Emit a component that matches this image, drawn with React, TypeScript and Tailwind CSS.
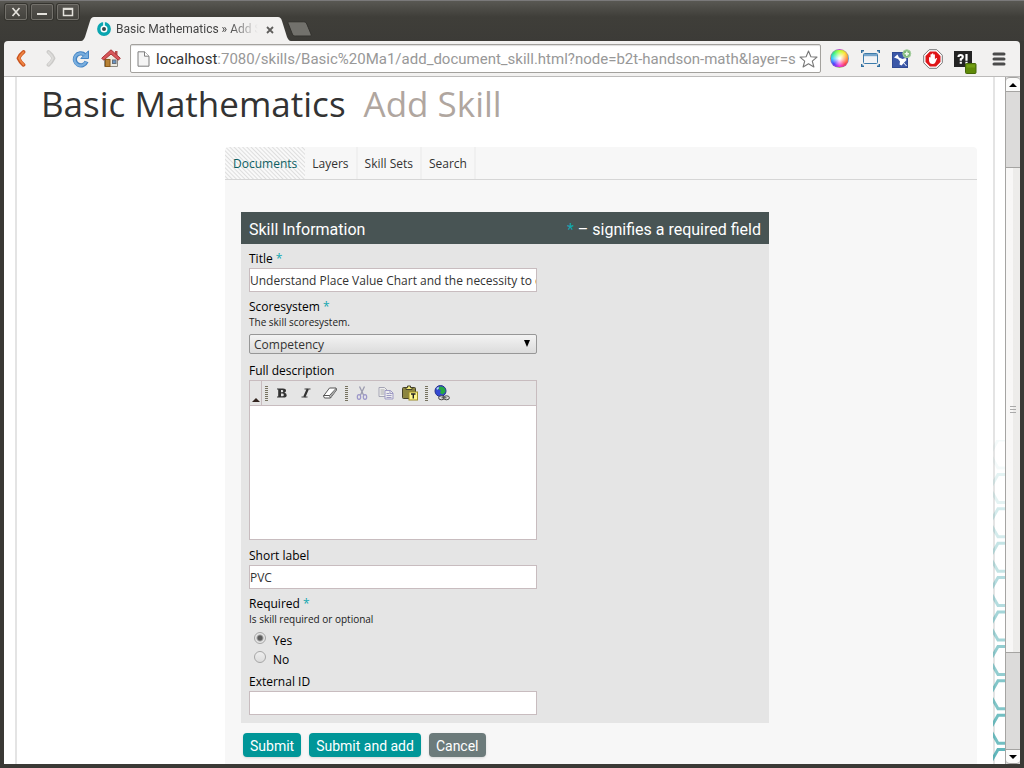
import React from "react";

const tabs = ["Documents", "Layers", "Skill Sets", "Search"];

function WindowButton({ label, children }: { label: string; children: React.ReactNode }) {
  return (
    <button
      aria-label={label}
      className="flex h-4 w-[22px] items-center justify-center rounded-xs border border-[#73716b] bg-linear-to-b from-[#55534e] to-[#44433e] shadow-[0_0_0_1px_#35342f]"
    >
      <svg width="12" height="10" viewBox="0 0 12 10" fill="none" stroke="#e4e2dc" strokeWidth="1.5">
        {children}
      </svg>
    </button>
  );
}

function TitleBar() {
  return (
    <header className="flex h-[41px] border-t border-[#7a797a] bg-linear-to-b from-[#595853] via-[#3f3e39] via-40% to-[#3c3b37] pl-[5px]">
      <div className="flex gap-1 pt-[3px]">
        <WindowButton label="Close">
          <path d="M2.5 1l7 8M9.5 1l-7 8" strokeWidth="1.7" />
        </WindowButton>
        <WindowButton label="Minimize">
          <path d="M1 7h10" strokeWidth="2" />
        </WindowButton>
        <WindowButton label="Maximize">
          <rect x="1.5" y="1.5" width="9" height="7" />
          <path d="M1.5 2.2h9" />
        </WindowButton>
      </div>
      <div className="ml-0.5 flex items-end">
        <svg width="13" height="24" viewBox="0 0 13 24" aria-hidden="true">
          <path d="M0 24C2 24 3 22 4 20L9 4C10 1 11 0 13 0V24Z" fill="#f2f1f0" />
        </svg>
        <div className="flex h-6 w-[184px] items-center bg-[#f2f1f0] pl-[3px]">
          <svg width="14" height="14" viewBox="0 0 14 14" aria-hidden="true">
            <circle cx="7" cy="7" r="5.2" fill="#fff" stroke="#0aa5b0" strokeWidth="3.4" />
            <circle cx="7" cy="7" r="2" fill="#37474b" />
            <path d="M7 0v4.5" stroke="#fff" strokeWidth="1.6" />
          </svg>
          <span className="ml-[5px] w-[142px] overflow-hidden mask-r-from-80% font-[Roboto,sans-serif] text-xs whitespace-nowrap text-[#444]">
            Basic Mathematics » Add Skill
          </span>
          <button aria-label="Close tab" className="ml-2 pt-0.5">
            <svg width="8" height="8" viewBox="0 0 8 8" stroke="#5f5e5c" strokeWidth="1.8">
              <path d="M1 1l6 6M7 1l-6 6" />
            </svg>
          </button>
        </div>
        <svg width="13" height="24" viewBox="0 0 13 24" aria-hidden="true">
          <path d="M13 24C11 24 10 22 9 20L4 4C3 1 2 0 0 0V24Z" fill="#f2f1f0" />
        </svg>
      </div>
      <button aria-label="New tab" className="-ml-1 mt-5 self-start">
        <svg width="26" height="16" viewBox="0 0 26 16">
          <path
            d="M2 .8H16.5C18 .8 19 1.5 19.8 3L24 13C24.5 14.5 24 15 23 15H8.5C7 15 6 14.5 5.3 13L1.2 2.5C.8 1.3 1 .8 2 .8Z"
            fill="#72716c"
            stroke="#33322e"
          />
        </svg>
      </button>
    </header>
  );
}

function NavButton({ label, children }: { label: string; children: React.ReactNode }) {
  return (
    <button aria-label={label} className="flex w-[30px] items-center justify-center">
      {children}
    </button>
  );
}

function ExtButton({ label, children }: { label: string; children: React.ReactNode }) {
  return (
    <button aria-label={label} className="flex w-[31px] items-center justify-center">
      {children}
    </button>
  );
}

function AddressBar() {
  return (
    <nav className="flex h-9 items-stretch rounded-t border-b border-[#bcbbba] bg-[#f2f1f0] pr-1 pl-0.5">
      <NavButton label="Back">
        <svg width="10" height="17" viewBox="0 0 10 17" fill="none" strokeLinecap="round" strokeLinejoin="round">
          <path d="M7.5 2C5.5 3.5 3.800 5.500 2.500 8.200C3.700 11 5.500 13 7.500 14.800" stroke="#c9531d" strokeWidth="3.8" />
          <path d="M7.500 2.200C5.700 4 4.200 5.800 3 8.200C4.100 10.800 5.700 12.700 7.500 14.500" stroke="#ef8544" strokeWidth="1.8" />
        </svg>
      </NavButton>
      <NavButton label="Forward">
        <svg width="10" height="17" viewBox="0 0 10 17" fill="none" strokeLinecap="round" strokeLinejoin="round">
          <path d="M2.500 2C4.500 3.500 6.200 5.500 7.500 8.200C6.300 11 4.500 13 2.500 14.800" stroke="#cbcac8" strokeWidth="3.8" />
          <path d="M2.500 2.200C4.300 4 5.800 5.800 7 8.200C5.900 10.800 4.300 12.700 2.500 14.500" stroke="#dddcda" strokeWidth="1.8" />
        </svg>
      </NavButton>
      <NavButton label="Reload">
        <svg width="18" height="18" viewBox="0 0 18 18" fill="none">
          <path d="M14.500 11.500A6 6 0 1 1 12.800 4.800" stroke="#4484c4" strokeWidth="4.200" />
          <path d="M16.500 .8V8.500H8.800Z" fill="#79aede" stroke="#4484c4" />
          <path d="M14 11.800A6 6 0 1 1 12.500 5" stroke="#79aede" strokeWidth="2.300" />
        </svg>
      </NavButton>
      <NavButton label="Home">
        <svg width="20" height="19" viewBox="0 0 20 19">
          <path d="M3.500 9L10 3.500L16.500 9V17.500H3.500Z" fill="#ece9df" stroke="#8d8a82" />
          <path d="M14 2h2.500v4H14Z" fill="#b54b48" />
          <path d="M10 .8L19.300 9.200L17.300 11.200L10 5L2.700 11.200L.7 9.200Z" fill="#d9575a" stroke="#a93437" />
          <rect x="4.500" y="10.500" width="4.500" height="7" fill="#b88235" stroke="#8a5b1c" />
          <rect x="11.500" y="11" width="3.500" height="3.500" fill="#6995c5" stroke="#68707a" />
        </svg>
      </NavButton>
      <div className="my-[3px] ml-1 flex min-w-0 flex-1 items-center rounded-xs border border-[#a3a19d] bg-white px-1.5 shadow-[inset_0_1px_1px_#ddd]">
        <svg width="13" height="16" viewBox="0 0 13 16" className="shrink-0" aria-hidden="true">
          <path d="M1 .8H7.500L12 5.200V15.200H1Z" fill="#f4f4f4" stroke="#7e7e7e" />
          <path d="M7.500 .8V5.200H12" fill="#fff" stroke="#7e7e7e" />
        </svg>
        <div className="ml-1.5 flex-1 overflow-hidden font-[Roboto,sans-serif] text-[15px] leading-5 whitespace-nowrap text-[#989898]">
          <span className="text-[#333]">localhost</span>
          :7080/skills/Basic%20Ma1/add_document_skill.html?node=b2t-handson-math&amp;layer=s
        </div>
        <button aria-label="Bookmark" className="-mr-1 shrink-0">
          <svg width="19" height="18" viewBox="0 0 19 18" fill="#fff" stroke="#777" strokeWidth="1.1">
            <path d="M9.500 1L11.900 6.700L18 7.100L13.300 11.100L14.900 17L9.500 13.800L4.100 17L5.700 11.100L1 7.100L7.100 6.700Z" strokeLinejoin="round" />
          </svg>
        </button>
      </div>
      <div className="ml-[3px] flex">
        <ExtButton label="Color picker">
          <span className="size-[19px] rounded-full border border-[#8b6fae]/50 bg-[radial-gradient(circle,white_5%,transparent_65%),conic-gradient(#b6ff30,#ffe12d,#ff8d35,#ff3b4e,#f02ee0,#4d3bff,#2cc8ff,#35f577,#b6ff30)]" />
        </ExtButton>
        <ExtButton label="Capture">
          <svg width="19" height="17" viewBox="0 0 19 17" fill="none">
            <path d="M.7 3V.7H3M16 .7h2.300V3M18.300 14v2.300H16M3 16.300H.7V14" stroke="#2f6e9f" strokeWidth="1.4" />
            <rect x="2.500" y="3.500" width="14" height="10" rx="1" fill="#f1f3f5" stroke="#3c7baa" />
            <path d="M3 4h13v2.200H3Z" fill="#76a5cb" />
          </svg>
        </ExtButton>
        <ExtButton label="Pin">
          <svg width="20" height="19" viewBox="0 0 20 19">
            <rect x=".5" y="3.500" width="15" height="15" fill="#3c58a8" stroke="#304a94" />
            <path d="M2 8.500L5.500 5.500L7 8.500L10.500 10L13.500 9L14.500 11L9.500 16.500L7.500 15.500L8 12.500L6 10Z" fill="#fff" />
            <path d="M11 13l3.500 4" stroke="#fff" />
            <circle cx="14.800" cy="4.700" r="4" fill="#7fba78" stroke="#a7cea0" />
            <path d="M14.800 2.500v4.400M12.600 4.700h4.400" stroke="#eef7ec" strokeWidth="1.5" />
          </svg>
        </ExtButton>
        <ExtButton label="Ad blocker">
          <svg width="20" height="20" viewBox="0 0 20 20">
            <path d="M6.200.7H13.800L19.300 6.200V13.800L13.800 19.300H6.200L.7 13.800V6.200Z" fill="#fff" stroke="#777" />
            <path d="M6.900 2.500H13.100L17.500 6.900V13.100L13.100 17.500H6.900L2.500 13.100V6.900Z" fill="#df1518" />
            <path d="M6 8.500q.8-.8 1.500 0V5.500q.8-.9 1.400 0V4.700q.8-.9 1.500 0v1q.8-.9 1.500 0v4.500l1.300-1.200q1-.3.8.7L12.300 13.500Q11.500 15 9.500 15Q6.500 15 6 11.500Z" fill="#fff" />
          </svg>
        </ExtButton>
      </div>
      <button aria-label="Notes" className="flex w-[34px] items-end justify-center pb-0.5">
        <svg width="23" height="23" viewBox="0 0 23 23">
          <rect width="18" height="16" fill="#232323" />
          <path d="M4.500 6Q4.500 4 6.500 4Q8.800 4 8.800 6Q8.800 7.300 6.800 8.300V9.700M12.500 3V9.700" fill="none" stroke="#fff" strokeWidth="2.2" />
          <path d="M5.700 10.800h2.200v2H5.700ZM11.400 10.800h2.200v2h-2.200Z" fill="#fff" />
          <rect x="11.500" y="12.500" width="10.500" height="10" rx="1" fill="#5f8a08" stroke="#47690a" />
          <path d="M12.500 13.500h8.500v3h-8.500Z" fill="#739e14" />
        </svg>
      </button>
      <button aria-label="Menu" className="flex w-[34px] items-center justify-center">
        <svg width="14" height="14" viewBox="0 0 14 14" stroke="#4b4b4b" strokeWidth="3" strokeLinecap="round">
          <path d="M2 2h10M2 7h10M2 12h10" />
        </svg>
      </button>
    </nav>
  );
}

function Label({ htmlFor, required, children }: { htmlFor: string; required?: boolean; children: React.ReactNode }) {
  return (
    <label htmlFor={htmlFor} className="block pt-0.5 text-xs leading-[18px] text-black">
      {children}
      {required && <span className="text-[#12a7b0]"> *</span>}
    </label>
  );
}

function TextField({ id, value }: { id: string; value: string }) {
  return (
    <input
      id={id}
      defaultValue={value}
      className="block h-6 w-full border border-[#c8bcbf] bg-white text-xs text-[#333] outline-none"
    />
  );
}

function Tool({ label, children }: { label: string; children: React.ReactNode }) {
  return (
    <button type="button" aria-label={label} className="flex w-6 items-center justify-center">
      <svg width="16" height="16" viewBox="0 0 16 16" fill="none">
        {children}
      </svg>
    </button>
  );
}

function Grip() {
  return (
    <span className="flex w-2 items-center justify-center">
      <svg width="3" height="15" viewBox="0 0 3 15" stroke="#777360" strokeWidth="1">
        <path d="M0 .5h3M0 2.500h3M0 4.500h3M0 6.500h3M0 8.500h3M0 10.500h3M0 12.500h3M0 14.500h3" />
      </svg>
    </span>
  );
}

function Editor() {
  return (
    <div className="flex h-40 flex-col border border-[#c8bcbf] bg-white">
      <div className="flex h-[25px] border-b border-[#c8bcbf] bg-[#e5e5e5]">
        <button type="button" aria-label="Collapse toolbar" className="flex w-3 items-end justify-center border-r border-[#c8bcbf] pb-[3px]">
          <svg width="8" height="4" viewBox="0 0 8 4">
            <path d="M0 4L4 0L8 4Z" fill="#32241e" />
          </svg>
        </button>
        <Grip />
        <Tool label="Bold">
          <path d="M3 3.500H9Q12 3.500 12 5.800Q12 7.300 10.300 7.800Q12.700 8.300 12.700 10.200Q12.700 12.500 9.500 12.500H3V11.500H4.200V4.500H3ZM7 5V7.300H8Q9.300 7.300 9.300 6.100Q9.300 5 8 5ZM7 8.600V11.200H8.300Q9.800 11.200 9.800 9.900Q9.800 8.600 8.300 8.600Z" fill="#333" fillRule="evenodd" />
        </Tool>
        <Tool label="Italic">
          <path d="M6.500 4h6M3.500 12h6" stroke="#444" strokeWidth="1.2" />
          <path d="M9.800 4L6.300 12" stroke="#333" strokeWidth="2.2" />
        </Tool>
        <Tool label="Remove format">
          <path d="M7.500 3H14L14.500 5L8.500 13H2.500L1.500 11Z" fill="#fff" stroke="#555" />
          <path d="M1.500 10.500H7.500L14 3.500M7.500 10.500L8.500 13" stroke="#555" />
          <path d="M8.200 10.500L14 4.500V5.500L8.800 12.500Z" fill="#999" />
        </Tool>
        <Grip />
        <Tool label="Cut">
          <path d="M5.500 1.500L9.500 10M10.500 1.500L6.500 10" stroke="#9b9bae" strokeWidth="1.3" />
          <ellipse cx="5" cy="12" rx="1.700" ry="2.300" stroke="#9c97c9" strokeWidth="1.2" />
          <ellipse cx="11" cy="12" rx="1.700" ry="2.300" stroke="#9c97c9" strokeWidth="1.2" />
        </Tool>
        <Tool label="Copy">
          <path d="M1 2.500H6.500L9 5V11.500H1Z" fill="#eee" stroke="#a5a5b4" />
          <path d="M2.500 5h4M2.500 7h4M2.500 9h4" stroke="#aaa" />
          <path d="M7 5.500H12.500L15 8V14H7Z" fill="#eee" stroke="#9f9bc5" />
          <path d="M12 5.500V8.500H15M8.500 8.500h3M8.500 10.500h5M8.500 12.500h5" stroke="#9f9bc5" />
        </Tool>
        <Tool label="Paste as text">
          <rect x=".5" y="2.500" width="13" height="11" rx="1" fill="#8b8540" stroke="#45422b" />
          <path d="M4 4.500V2.500H5.500V1H8.500V2.500H10V4.500Z" fill="#f1eb79" stroke="#45422b" />
          <rect x="7" y="7" width="8.500" height="8" fill="#fff78c" stroke="#9b8c28" />
          <path d="M9 9h4.500M11.300 9v4.500" stroke="#222" strokeWidth="1.4" />
        </Tool>
        <Grip />
        <Tool label="Link">
          <circle cx="6.500" cy="6" r="5.500" fill="#3449d2" stroke="#26318b" />
          <path d="M5.500 1.500Q9 1 11 3.500L11.500 7L8.500 9.500L6 8L7 5.500L4.500 4.500Z" fill="#25a943" />
          <path d="M2.500 3L4.500 1.700L5 3.300L3 5Z" fill="#b9d8f5" />
          <ellipse cx="7.500" cy="12.800" rx="2.900" ry="2" fill="#ddd" stroke="#444" />
          <ellipse cx="12.500" cy="12.800" rx="2.900" ry="2" fill="#ddd" stroke="#444" />
          <path d="M7.500 12.800h5" stroke="#444" />
        </Tool>
      </div>
      <textarea id="description" className="min-h-0 flex-1 resize-none text-xs outline-none" />
    </div>
  );
}

function Radio({ id, label, checked }: { id: string; label: string; checked?: boolean }) {
  return (
    <div className="flex h-[19px] items-center pl-[5px]">
      <input
        type="radio"
        id={id}
        name="required"
        defaultChecked={checked}
        className="mb-1.5 size-3 appearance-none rounded-full border border-[#a6a6a6] bg-linear-to-b from-[#eee] to-[#dcdcdc] checked:bg-[radial-gradient(circle,#5c5c5c_0_2px,#e6e6e6_4px)]"
      />
      <label htmlFor={id} className="ml-[7px] text-xs leading-5 text-black">
        {label}
      </label>
    </div>
  );
}

function SkillForm() {
  return (
    <form className="mt-8 px-4" onSubmit={(e) => e.preventDefault()}>
      <div className="w-[528px] max-w-full bg-[#e5e5e5]">
        <div className="flex h-8 items-center justify-between bg-[#485454] px-2 pt-[3px] font-[Roboto,sans-serif] text-base text-white">
          <h2>Skill Information</h2>
          <p>
            <span className="text-[#12a7b0]">*</span> – signifies a required field
          </p>
        </div>
        <div className="px-2 pt-1 pb-2">
          <div className="w-72">
            <Label htmlFor="title" required>Title</Label>
            <TextField id="title" value="Understand Place Value Chart and the necessity to change" />
            <div className="mt-1">
              <Label htmlFor="score" required>Scoresystem</Label>
              <p className="text-[10px] leading-3 text-[#1a1a1a]">The skill scoresystem.</p>
              <div className="relative mt-1.5">
                <select
                  id="score"
                  className="block h-5 w-full appearance-none rounded-xs border border-[#979797] bg-linear-to-b from-[#f3f3f3] to-[#dcdcdc] px-1 pt-px text-xs leading-4 text-[#333]"
                >
                  <option>Competency</option>
                </select>
                <svg width="6" height="7" viewBox="0 0 6 7" className="pointer-events-none absolute top-1.5 right-[7px]">
                  <path d="M0 0H6L3 7Z" fill="#000" />
                </svg>
              </div>
            </div>
            <div className="mt-1.5">
              <Label htmlFor="description">Full description</Label>
              <Editor />
            </div>
            <div className="mt-[5px]">
              <Label htmlFor="short">Short label</Label>
              <TextField id="short" value="PVC" />
            </div>
            <div className="mt-1">
              <Label htmlFor="yes" required>Required</Label>
              <p className="text-[10px] leading-3 text-[#1a1a1a]">Is skill required or optional</p>
              <div className="mt-1.5">
                <Radio id="yes" label="Yes" checked />
                <Radio id="no" label="No" />
              </div>
            </div>
            <div className="mt-0.5">
              <Label htmlFor="external">External ID</Label>
              <TextField id="external" value="" />
            </div>
          </div>
        </div>
      </div>
      <div className="mt-2.5 ml-0.5 flex gap-2 font-[Roboto,sans-serif] text-sm text-white">
        <button className="h-6 rounded bg-[#009698] px-[7px] pt-0.5 shadow">Submit</button>
        <button className="h-6 rounded bg-[#009698] px-[7px] pt-0.5 shadow">Submit and add</button>
        <button type="button" className="h-6 rounded bg-[#6c7b7b] px-[7px] pt-0.5 shadow">Cancel</button>
      </div>
    </form>
  );
}

function Scrollbar() {
  return (
    <div className="flex w-[15px] shrink-0 flex-col border-l border-[#a5a4a2] bg-[#dcdbda]" aria-hidden="true">
      <div className="flex h-[15px] items-center justify-center rounded-t border-y border-[#a5a4a2] bg-[#fbfbfa]">
        <svg width="8" height="4" viewBox="0 0 8 4"><path d="M0 4L4 0L8 4Z" /></svg>
      </div>
      <div className="grow-[75]" />
      <div className="flex grow-[478] items-center justify-center border-y border-[#a5a4a2] bg-linear-to-r from-[#f8f7f6] from-50% to-[#edecea] to-50%">
        <svg width="6" height="8" viewBox="0 0 6 8" stroke="#aaa"><path d="M0 .5h6M0 3.500h6M0 6.500h6" /></svg>
      </div>
      <div className="grow-[96]" />
      <div className="flex h-[15px] items-center justify-center rounded-b border-y border-[#a5a4a2] bg-[#fbfbfa]">
        <svg width="8" height="4" viewBox="0 0 8 4"><path d="M0 0L4 4L8 0Z" /></svg>
      </div>
    </div>
  );
}

function HexPattern() {
  return (
    <svg width="12" height="324" viewBox="0 0 12 324" fill="none" stroke="#279ca2" strokeWidth="3" className="absolute right-0 bottom-0" aria-hidden="true">
      {Array.from({ length: 10 }, (_, i) => {
        const top = i * 34.4;
        return (
          <path
            key={i}
            opacity={0.05 + i * 0.075}
            d={`M12 ${top}H5L-3 ${top + 14}L5 ${top + 28}H12`}
          />
        );
      })}
    </svg>
  );
}

export default function App() {
  return (
    <div className="flex h-screen flex-col overflow-hidden border-b-4 border-[#3a3935] bg-[#3c3b37] font-['Open_Sans',sans-serif]">
      <TitleBar />
      <div className="flex min-h-0 flex-1 flex-col border-x-4 border-[#3a3935]">
        <AddressBar />
        <div className="flex min-h-0 flex-1 bg-white">
          <div className="relative min-w-0 flex-1 overflow-hidden pr-2.5 pl-[11px]">
            <main className="flex h-full flex-col border-x-2 border-[#e4e4e4]">
              <h1 className="mt-[7px] flex h-10 shrink-0 items-center gap-[18px] pl-6 text-[35px] leading-10 text-[#333]">
                <span>Basic Mathematics</span>
                <span className="text-[#b0a69f]">Add Skill</span>
              </h1>
              <section className="mt-[23px] mr-4 ml-52 flex-1 rounded-t bg-[#f7f7f7]">
                <nav className="flex h-[33px] border-b border-[#d6d6d6] text-xs text-[#333]">
                  {tabs.map((tab, i) => (
                    <a
                      key={tab}
                      href="#"
                      className={
                        i === 0
                          ? "flex items-center rounded-tl bg-[repeating-linear-gradient(45deg,#f9f9f9_0_1px,#dedede_2px,#f9f9f9_3px)] px-2 pt-0.5 text-[#0d5f63]"
                          : "flex items-center border-r-2 border-[#f0f0f0] px-[7px] pt-0.5"
                      }
                    >
                      {tab}
                    </a>
                  ))}
                </nav>
                <SkillForm />
              </section>
            </main>
            <HexPattern />
          </div>
          <Scrollbar />
        </div>
      </div>
    </div>
  );
}
